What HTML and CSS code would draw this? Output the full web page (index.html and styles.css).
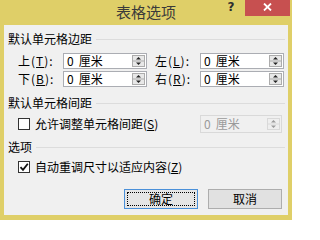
FILE: index.html
```html
<!DOCTYPE html>
<html lang="zh-CN">
<head>
<meta charset="utf-8">
<title>表格选项</title>
<link rel="stylesheet" href="styles.css">
</head>
<body>
<div class="window">
  <div class="titlebar">
    <div></div>
    <div class="title">表格选项</div>
    <div class="controls">
      <span class="help">?</span>
      <span class="close"><svg width="9" height="8" viewBox="0 0 9 8"><path d="M1 0.5L8 7.5M8 0.5L1 7.5" stroke="#fff" stroke-width="1.8"/></svg></span>
    </div>
  </div>
  <div class="body">
    <div class="group-head"><span>默认单元格边距</span><i class="rule"></i></div>
    <div class="row first">
      <div class="field"><span class="label">上(<u>T</u>):</span><div class="spin"><span class="num">0</span><span class="unit">厘米</span><svg class="spinbtn" width="13" height="12" viewBox="0 0 13 12"><rect x=".5" y=".5" width="12" height="11" fill="#e8e8e8" stroke="#acacac"/><line x1="1" y1="6" x2="12" y2="6" stroke="#acacac"/><path d="M4 4.5h5L6.5 2z" fill="#222"/><path d="M4 7.5h5L6.5 10z" fill="#222"/></svg></div></div>
      <div class="field"><span class="label">左(<u>L</u>):</span><div class="spin"><span class="num">0</span><span class="unit">厘米</span><svg class="spinbtn" width="13" height="12" viewBox="0 0 13 12"><rect x=".5" y=".5" width="12" height="11" fill="#e8e8e8" stroke="#acacac"/><line x1="1" y1="6" x2="12" y2="6" stroke="#acacac"/><path d="M4 4.5h5L6.5 2z" fill="#222"/><path d="M4 7.5h5L6.5 10z" fill="#222"/></svg></div></div>
    </div>
    <div class="row second">
      <div class="field"><span class="label">下(<u>B</u>):</span><div class="spin"><span class="num">0</span><span class="unit">厘米</span><svg class="spinbtn" width="13" height="12" viewBox="0 0 13 12"><rect x=".5" y=".5" width="12" height="11" fill="#e8e8e8" stroke="#acacac"/><line x1="1" y1="6" x2="12" y2="6" stroke="#acacac"/><path d="M4 4.5h5L6.5 2z" fill="#222"/><path d="M4 7.5h5L6.5 10z" fill="#222"/></svg></div></div>
      <div class="field"><span class="label">右(<u>R</u>):</span><div class="spin"><span class="num">0</span><span class="unit">厘米</span><svg class="spinbtn" width="13" height="12" viewBox="0 0 13 12"><rect x=".5" y=".5" width="12" height="11" fill="#e8e8e8" stroke="#acacac"/><line x1="1" y1="6" x2="12" y2="6" stroke="#acacac"/><path d="M4 4.5h5L6.5 2z" fill="#222"/><path d="M4 7.5h5L6.5 10z" fill="#222"/></svg></div></div>
    </div>
    <div class="group-head gh2"><span>默认单元格间距</span><i class="rule"></i></div>
    <div class="spacing-row">
      <span class="box"></span>
      <span class="check-label">允许调整单元格间距(<u>S</u>)</span>
      <div class="spin disabled"><span class="num">0</span><span class="unit">厘米</span><svg class="spinbtn" width="13" height="12" viewBox="0 0 13 12"><rect x=".5" y=".5" width="12" height="11" fill="#efefef" stroke="#d9d9d9"/><line x1="1" y1="6" x2="12" y2="6" stroke="#d9d9d9"/><path d="M4 4.5h5L6.5 2z" fill="#9a9a9a"/><path d="M4 7.5h5L6.5 10z" fill="#9a9a9a"/></svg></div>
    </div>
    <div class="group-head gh3"><span>选项</span><i class="rule"></i></div>
    <div class="check-row">
      <span class="box"><svg width="10" height="10" viewBox="0 0 10 10"><path d="M1.5 5.2L4 7.8L8.8 1.8" fill="none" stroke="#111" stroke-width="1.8"/></svg></span>
      <span class="check-label">自动重调尺寸以适应内容(<u>Z</u>)</span>
    </div>
    <div class="buttons">
      <div class="btn default">确定</div>
      <div class="btn">取消</div>
    </div>
  </div>
</div>
</body>
</html>
```
FILE: styles.css
```css
body {
  margin: 0;
}
.window {
  width: 292px;
  height: 220px;
  background: #dfcf68;
  display: flex;
  flex-direction: column;
  font-family: "Noto Sans CJK SC", "Noto Sans", sans-serif;
  font-size: 12px;
  color: #000;
  overflow: hidden;
}
.titlebar {
  height: 25px;
  flex: none;
  display: grid;
  grid-template-columns: 1fr auto 1fr;
}
.title {
  font-size: 15px;
  line-height: 22px;
  padding-top: 1px;
  color: #3a3a3a;
  white-space: nowrap;
}
.controls {
  justify-self: end;
  align-self: start;
  display: flex;
  margin-right: 2px;
}
.help {
  width: 28px;
  height: 14px;
  display: flex;
  align-items: center;
  justify-content: center;
  font: bold 12px "DejaVu Sans", sans-serif;
  color: #2e2e2e;
}
.close {
  width: 45px;
  height: 16px;
  background: #c75050;
  display: flex;
  align-items: center;
  justify-content: center;
  padding-bottom: 2px;
  box-sizing: border-box;
}
.body {
  flex: 1;
  margin: 0 4px 5px 4px;
  background: #f0f0f0;
  padding: 6px 3px 0 4px;
  display: flex;
  flex-direction: column;
}
.group-head {
  display: flex;
  align-items: center;
  gap: 4px;
  height: 16px;
  line-height: 16px;
  white-space: nowrap;
}
.gh2 {
  margin-top: 8px;
}
.gh3 {
  margin-top: 6px;
}
.rule {
  flex: 1;
  height: 1px;
  background: #dcdcdc;
}
.row {
  display: flex;
  align-items: center;
  padding-left: 10px;
  height: 16px;
}
.row.first {
  margin-top: 6px;
}
.row.second {
  margin-top: 2px;
}
.field {
  display: flex;
  align-items: center;
}
.field + .field {
  margin-left: 8px;
}
.label {
  flex: none;
  width: 45px;
  line-height: 16px;
  white-space: nowrap;
  letter-spacing: 1px;
}
.spin {
  flex: none;
  width: 84px;
  height: 16px;
  box-sizing: border-box;
  border: 1px solid #abadb3;
  background: #fff;
  display: flex;
  align-items: center;
  padding: 0 1px 0 3px;
  line-height: 14px;
}
.unit {
  margin-left: 5px;
}
.spinbtn {
  display: block;
  flex: none;
  margin-left: auto;
}
.spin.disabled {
  width: 82px;
  height: 18px;
  border-color: #d9d9d9;
  background: #f0f0f0;
  color: #9a9a9a;
}
.spacing-row {
  display: grid;
  grid-template-columns: 17px 1fr 84px;
  align-items: center;
  padding-left: 10px;
  padding-right: 1px;
  height: 18px;
  margin-top: 4px;
}
.check-row {
  display: flex;
  align-items: center;
  padding-left: 10px;
  height: 18px;
  margin-top: 3px;
}
.box {
  flex: none;
  width: 12px;
  height: 12px;
  box-sizing: border-box;
  border: 1px solid #333;
  background: #fff;
  margin-right: 5px;
  display: flex;
  align-items: center;
  justify-content: center;
}
.check-label {
  line-height: 16px;
  white-space: nowrap;
}
.buttons {
  display: flex;
  justify-content: flex-end;
  gap: 10px;
  margin-top: 13px;
  padding-right: 3px;
}
.btn {
  width: 74px;
  height: 20px;
  box-sizing: border-box;
  border: 1px solid #adadad;
  background: #e1e1e1;
  display: flex;
  align-items: center;
  justify-content: center;
  line-height: 16px;
}
.btn.default {
  border-color: #4a90d9;
  background: #e5e5e5;
  outline: 1px dotted #000;
  outline-offset: -4px;
}
```
